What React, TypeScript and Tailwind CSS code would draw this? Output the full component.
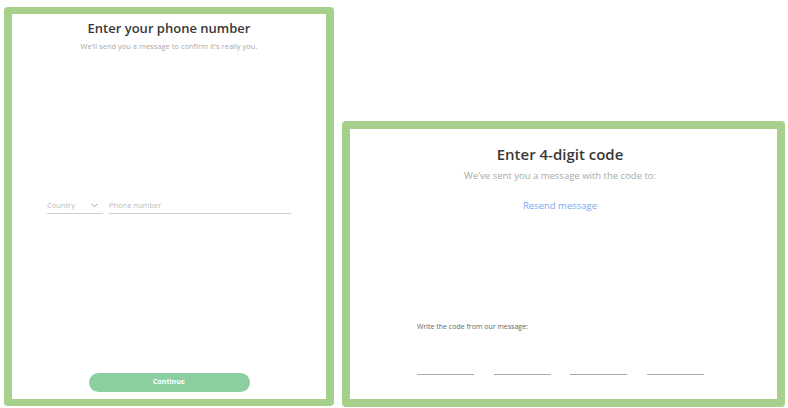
import React from "react";

export default function App() {
  return (
    <div
      className="w-[788px] h-[408px] bg-white flex items-start"
      style={{ fontFamily: '"Open Sans", "Noto Sans", sans-serif' }}
    >
      {/* Left card */}
      <div className="ml-[4px] mt-[7px] w-[330px] h-[399px] rounded-[4px] border-x-8 border-y-[7px] border-[#a7d08c] bg-white flex flex-col">
        <div className="pt-[5px] flex flex-col items-center">
          <div className="text-[13px] leading-[18px] font-semibold text-[#383838]">Enter your phone number</div>
          <div className="mt-[3px] text-[7.5px] leading-[12px] text-[#a9a9a9]">
            We'll send you a message to confirm it's really you.
          </div>
        </div>
        <div className="mt-[146px] pl-[35px] flex gap-[6px]">
          <div className="w-[56px] h-[16px] border-b border-[#cfcfcf] flex items-center justify-between pr-[5px]">
            <span className="text-[7.5px] text-[#bcbcbc]">Country</span>
            <svg width="7" height="5" viewBox="0 0 7 5" fill="none">
              <path d="M0.6 0.9 L3.5 3.8 L6.4 0.9" stroke="#a0a0a0" strokeWidth="1" />
            </svg>
          </div>
          <div className="w-[182px] h-[16px] border-b border-[#cfcfcf] flex items-center">
            <span className="text-[7.5px] text-[#bcbcbc]">Phone number</span>
          </div>
        </div>
        <div className="mt-auto mb-[7px] flex justify-center">
          <button className="w-[161px] h-[19px] rounded-full bg-[#8bcfa1] text-white text-[7px] font-bold flex items-center justify-center">
            Continue
          </button>
        </div>
      </div>

      {/* Right card */}
      <div className="ml-[8px] mt-[121px] w-[443px] h-[286px] rounded-[4px] border-8 border-[#a7d08c] bg-white flex flex-col">
        <div className="pt-[15px] pr-[7px] flex flex-col items-center">
          <div className="text-[15px] leading-[20px] font-semibold text-[#383838]">Enter 4-digit code</div>
          <div className="mt-[5px] text-[9.5px] leading-[13px] text-[#a9a9a9]">
            We've sent you a message with the code to:
          </div>
          <div className="mt-[17px] text-[9.5px] leading-[13px] text-[#79aaf2]">Resend message</div>
        </div>
        <div className="mt-[109.5px] pl-[67px] text-[7px] leading-[10px] text-[#666666]">
          Write the code from our message:
        </div>
        <div className="mt-[42px] pl-[67px] flex gap-[19.5px]">
          <div className="w-[57px] h-[1.5px] bg-[#a9a9a9]" />
          <div className="w-[57px] h-[1.5px] bg-[#a9a9a9]" />
          <div className="w-[57px] h-[1.5px] bg-[#a9a9a9]" />
          <div className="w-[57px] h-[1.5px] bg-[#a9a9a9]" />
        </div>
      </div>
    </div>
  );
}
